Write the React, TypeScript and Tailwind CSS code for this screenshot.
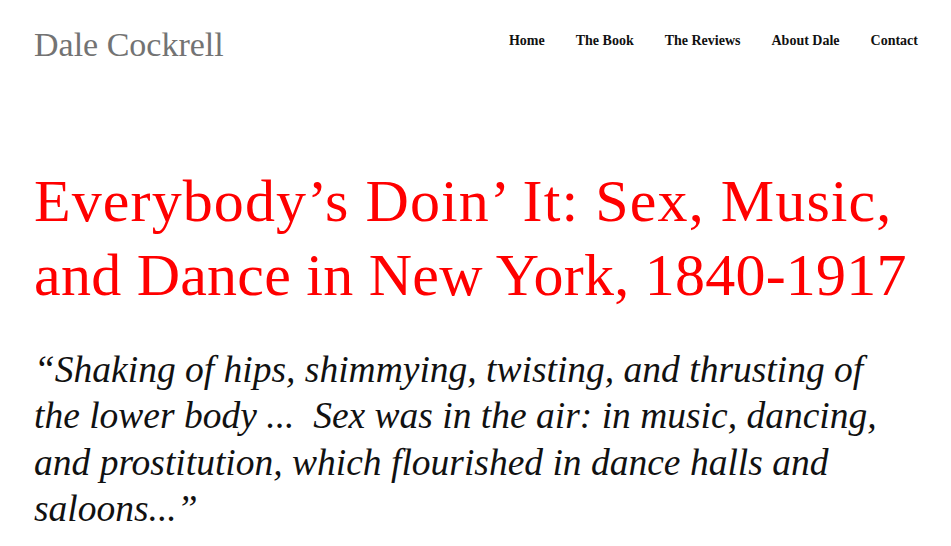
const navItems = ["Home", "The Book", "The Reviews", "About Dale", "Contact"];

const App = () => {
  return (
    <div className="min-h-[546px] w-full bg-white font-['Liberation_Serif',serif]">
      {/* header */}
      <header className="flex items-start justify-between pl-[34px] pr-[33px] pt-[25px]">
        <h2 className="text-[34px] leading-[40.8px] text-[#737373]">Dale Cockrell</h2>
        <nav className="flex gap-[31px] pt-[6px]">
          {navItems.map((item) => (
            <a key={item} href="#" className="text-[14px] leading-[20px] font-bold text-[#111111]">
              {item}
            </a>
          ))}
        </nav>
      </header>

      <main className="px-[34px]">
        {/* book title */}
        <h1 className="mt-[98px] whitespace-nowrap text-[60px] leading-[74px] text-[#ff0000]">
          <span className="tracking-[1.1px]">Everybody’s Doin’ It: Sex, Music,</span>
          <br />
          <span className="tracking-[0.25px]">and Dance in New York, 1840-1917</span>
        </h1>

        {/* quote */}
        <p className="mt-[35px] whitespace-nowrap text-[37.5px] leading-[46.5px] italic text-[#111111]">
          “Shaking of hips, shimmying, twisting, and thrusting of
          <br />
          the lower body ...&nbsp; Sex was in the air: in music, dancing,
          <br />
          and prostitution, which flourished in dance halls and
          <br />
          saloons...”
        </p>
      </main>
    </div>
  );
};

export default App;
